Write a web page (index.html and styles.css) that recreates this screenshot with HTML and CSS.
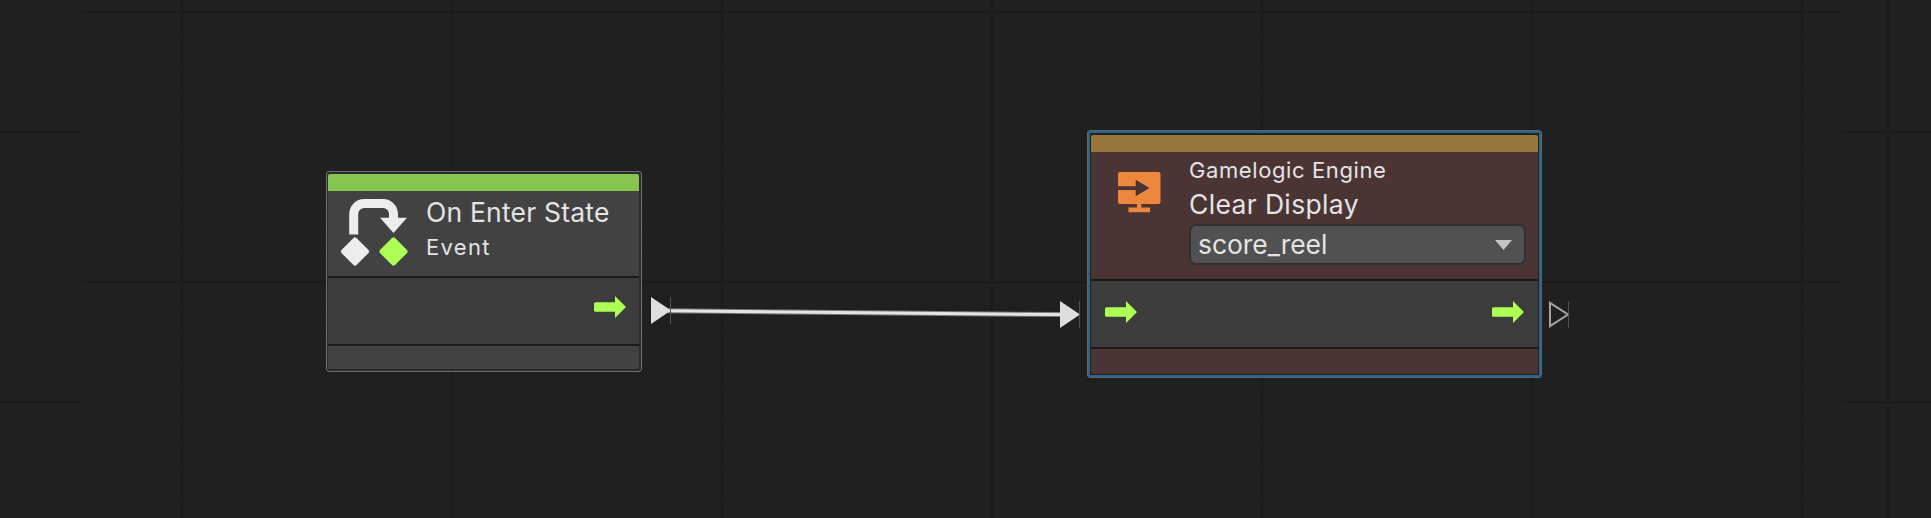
FILE: index.html
```html
<!DOCTYPE html>
<html lang="en">
<head>
<meta charset="utf-8">
<title>State graph</title>
<link rel="stylesheet" href="styles.css">
</head>
<body>
<main class="graph">
  <div class="grid grid-side"></div>
  <div class="grid grid-main"></div>
  <div class="grid grid-side grid-right"></div>

  <svg class="wires" viewBox="0 0 1931 518">
    <path class="wire-edge" d="M668 310.800 C760 310.800 970 314.600 1062 314.600"/>
    <path class="wire" d="M668 310.800 C760 310.800 970 314.600 1062 314.600"/>
    <path class="port" d="M651 297 L671 310.500 L651 324Z"/>
    <path class="port-tick" d="M670.500 297V324"/>
    <path class="port" d="M1060 301 L1080 314.500 L1060 328Z"/>
    <path class="port-tick" d="M1079.500 301V328"/>
    <path class="port-open" d="M1550 302.800 L1568 314.500 L1550 326.200Z"/>
    <path class="port-tick" d="M1568.500 301V328"/>
  </svg>

  <section class="node node-event">
    <div class="strip"></div>
    <header class="head">
      <svg class="icon-state" viewBox="0 0 72 74">
        <path class="hook" d="M11.700 39.500V19a10.500 10.500 0 0 1 10.500-10.500H41a10.500 10.500 0 0 1 10.500 10.500V24"/>
        <path class="lite" d="M38 22.700H65L51.500 38Z"/>
        <path class="lite rounded" d="M13 45L24.500 56.500L13 68L1.500 56.500Z"/>
        <path class="lime rounded" d="M51.500 45L63 56.500L51.500 68L40 56.500Z"/>
      </svg>
      <div class="titles">
        <div class="title t-state">On Enter State</div>
        <div class="sub t-event">Event</div>
      </div>
    </header>
    <div class="ports ports-out">
      <svg class="arrow" viewBox="0 0 32 22"><path d="M1.500 6.200H21V0L32 11L21 22V15.800H1.500Q0 15.800 0 14.300V7.700Q0 6.200 1.500 6.200Z"/></svg>
    </div>
    <div class="foot"></div>
  </section>

  <section class="node node-display">
    <div class="strip"></div>
    <header class="head">
      <svg class="icon-display" viewBox="0 0 44 42">
        <path d="M2 0H40.500Q42.500 0 42.500 2V30Q42.500 32 40.500 32H23.300V35.500H32V40.200H10.500V35.500H19V32H2Q0 32 0 30V18H17.700V24.300L31.500 16L17.700 7.700V14.300H0V2Q0 0 2 0Z"/>
      </svg>
      <div class="titles">
        <div class="sub t-engine">Gamelogic Engine</div>
        <div class="title t-clear">Clear Display</div>
        <div class="select"><span class="t-score">score_reel</span>
          <svg class="caret" viewBox="0 0 17 10"><path d="M0 0H17L8.500 10Z"/></svg>
        </div>
      </div>
    </header>
    <div class="ports ports-both">
      <svg class="arrow" viewBox="0 0 32 22"><path d="M1.500 6.200H21V0L32 11L21 22V15.800H1.500Q0 15.800 0 14.300V7.700Q0 6.200 1.500 6.200Z"/></svg>
      <svg class="arrow" viewBox="0 0 32 22"><path d="M1.500 6.200H21V0L32 11L21 22V15.800H1.500Q0 15.800 0 14.300V7.700Q0 6.200 1.500 6.200Z"/></svg>
    </div>
    <div class="foot"></div>
  </section>
</main>
</body>
</html>
```
FILE: styles.css
```css
* { box-sizing: border-box; }
body { margin: 0; background: #202020; }
.graph {
  position: relative;
  display: flex;
  width: 1931px;
  height: 518px;
  overflow: hidden;
  font-family: Inter, "Liberation Sans", sans-serif;
  font-weight: 400;
  color: #e4e4e4;
}
.grid {
  --gx: 0px;
  --gy: 0px;
  background-color: #202020;
  background-image:
    linear-gradient(90deg, #1b1b1b 2px, transparent 2px),
    linear-gradient(#1b1b1b 2px, transparent 2px),
    linear-gradient(90deg, #1d1d1d 1px, transparent 1px),
    linear-gradient(#1d1d1d 1px, transparent 1px);
  background-size: 270px 270px, 270px 270px, 27px 27px, 27px 27px;
  background-position: var(--gx) var(--gy);
}
.grid-side { width: 82px; --gx: -2px; --gy: 131px; }
.grid-main { width: 1760px; --gx: 99px; --gy: 11px; }
.grid-right { width: 89px; --gx: 45px; }

.wires { position: absolute; inset: 0; width: 1931px; height: 518px; }
.wire-edge { fill: none; stroke: #777; stroke-width: 5; }
.wire { fill: none; stroke: #e4e4e4; stroke-width: 3; }
.port { fill: #dedede; }
.port-tick { stroke: #505050; stroke-width: 1; }
.port-open { fill: none; stroke: #a4a4a4; stroke-width: 2; }

.node {
  position: absolute;
  display: flex;
  flex-direction: column;
  border-radius: 3px;
}
.node-event {
  left: 326px; top: 171px; width: 316px; height: 201px;
  border: 1px solid #707070;
  padding: 2px 2px 2px 1px;
  background: #2b2b2b;
}
.node-display {
  left: 1087px; top: 130px; width: 455px; height: 248px;
  border: 1px solid #56697a;
  background: #232323;
  box-shadow: inset 0 0 0 2px #2c6685;
  padding: 4px 3px 3px;
}
.strip { height: 17px; border-radius: 2px 2px 0 0; }
.node-event .strip { background: #88c450; }
.node-display .strip { background: #98753c; }
.head { display: flex; border-bottom: 2px solid #1b1b1b; }
.node-event .head { height: 87px; background: #424242; padding-left: 14px; }
.node-display .head { height: 129px; background: #4b3434; padding-left: 27px; }
.icon-state { width: 72px; height: 74px; margin-top: 4px; overflow: visible; }
.icon-display { width: 44px; height: 42px; margin-top: 20px; fill: #ec873d; }
.hook { fill: none; stroke: #ededed; stroke-width: 9; }
.lite { fill: #ededed; }
.lime { fill: #adff55; stroke: #adff55; }
.lite.rounded { stroke: #ededed; }
.rounded { stroke-linejoin: round; stroke-width: 5; }
.titles { display: flex; flex-direction: column; white-space: nowrap; }
.node-event .titles { padding: 4px 0 0 12px; }
.node-display .titles { padding: 1px 0 0 27px; }
.title { font-size: 26.500px; line-height: 34px; }
.sub { font-size: 22px; line-height: 34px; }
.t-state { letter-spacing: .2px; }
.t-event { letter-spacing: 1.300px; padding-top: 1px; }
.t-engine { letter-spacing: .6px; }
.t-clear { letter-spacing: .35px; }
.t-score { letter-spacing: -.05px; }
.select {
  display: flex;
  align-items: center;
  justify-content: space-between;
  width: 337px; height: 41px;
  margin-top: 3px;
  padding: 0 12px 2px 7px;
  border: 2px solid #303030;
  border-radius: 7px;
  background: #515151;
  font-size: 26.500px;
}
.caret { width: 17px; height: 10px; margin-top: 2px; fill: #c4c4c4; }
.ports { display: flex; height: 68px; padding: 20px 14px 0; background: #3c3c3c; border-bottom: 2px solid #1b1b1b; }
.ports-out { justify-content: flex-end; padding: 18px 13px 0; }
.ports-both { justify-content: space-between; }
.arrow { width: 32px; height: 22px; fill: #adff55; }
.foot { flex: 1; border-radius: 0 0 2px 2px; }
.node-event .foot { background: #424242; }
.node-display .foot { background: #4b3434; }
```
